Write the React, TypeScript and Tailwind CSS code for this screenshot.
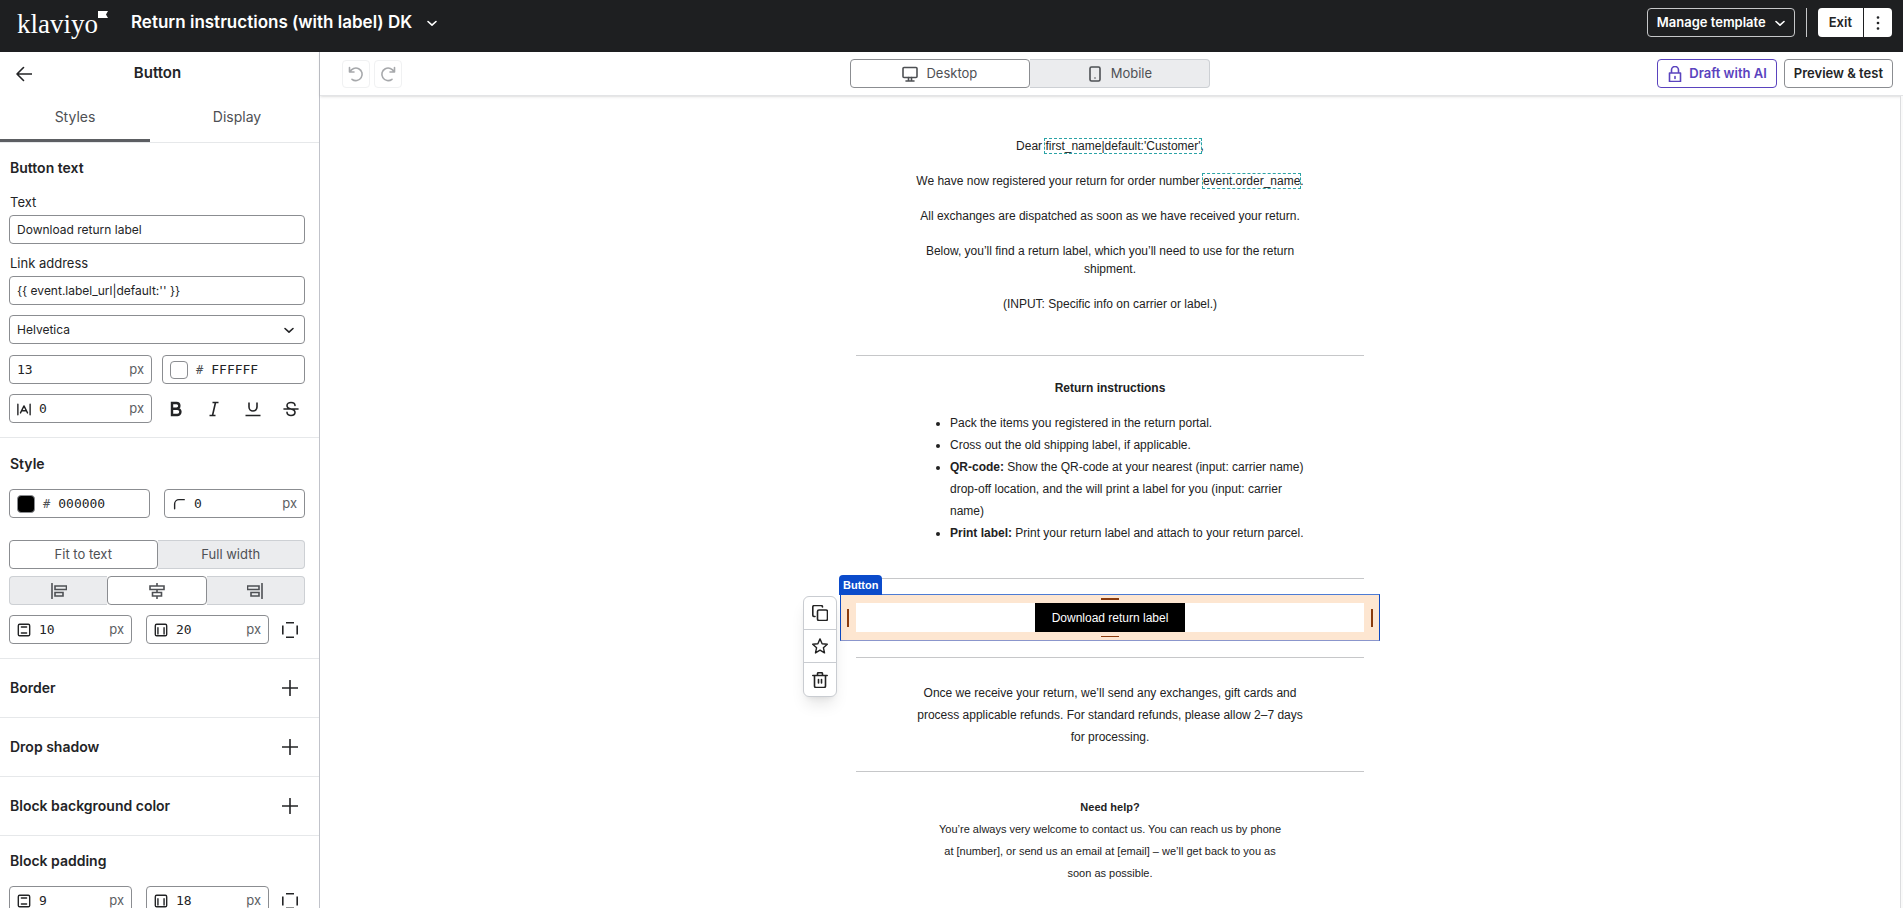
import React, { useState } from 'react';

const inputBox = 'flex h-[29px] min-w-0 items-center rounded border border-[#8b8d91] bg-white px-[7px] focus-within:ring-1 focus-within:ring-blue-500';
const textInput = 'w-full bg-transparent text-xs leading-5 outline-none';
const monoInput = "w-full min-w-0 bg-transparent font-['DejaVu_Sans_Mono',monospace] text-[13px] leading-5 text-[#232426] outline-none";
const sectionTitle = 'pl-px text-sm leading-5 font-semibold';
const fieldLabel = 'mb-1 block pl-px text-[13px] leading-[18px]';

interface IconProps {
  children: React.ReactNode;
  className?: string;
}

const Icon: React.FC<IconProps> = ({ children, className = 'size-4' }) => (
  <svg
    viewBox="0 0 16 16"
    fill="none"
    stroke="currentColor"
    strokeWidth="1.6"
    strokeLinecap="round"
    strokeLinejoin="round"
    aria-hidden="true"
    className={`shrink-0 ${className}`}
  >
    {children}
  </svg>
);

const ChevronIcon = () => (
  <Icon>
    <path d="M4 6.500 8 10.200l4-3.700" />
  </Icon>
);

const VerticalPaddingIcon = () => (
  <Icon className="size-[14px]">
    <rect x="1.500" y="1.500" width="13" height="13" rx="1.500" />
    <path d="M5 4.500h6M5 11.500h6" />
  </Icon>
);

const HorizontalPaddingIcon = () => (
  <Icon className="size-[14px]">
    <rect x="1.500" y="1.500" width="13" height="13" rx="1.500" />
    <path d="M4.500 5.500v7M11.500 5.500v7" />
  </Icon>
);

const ExpandSidesIcon = () => (
  <Icon>
    <path d="M4 .8h8M4 15.200h8M.8 3.500v9M15.200 3.500v9" strokeLinecap="butt" />
  </Icon>
);

const Logo = () => (
  <a href="#" aria-label="Klaviyo" className="flex h-8 w-[90px] items-start text-white">
    <span className="font-['Liberation_Serif',serif] text-[27px] leading-8">klaviyo</span>
    <svg viewBox="0 0 10 7" className="mt-[3px] h-[7px] w-[10px] shrink-0" aria-hidden="true">
      <path d="M0 0h10L8 3.500 10 7H0z" fill="currentColor" />
    </svg>
  </a>
);

interface SegmentProps {
  active: boolean;
  label?: string;
  ariaLabel?: string;
  icon?: React.ReactNode;
  onClick: () => void;
}

const Segment: React.FC<SegmentProps> = ({ active, label, ariaLabel, icon, onClick }) => (
  <button
    type="button"
    aria-label={ariaLabel}
    aria-pressed={active}
    onClick={onClick}
    className={`flex h-[29px] flex-1 items-center justify-center gap-2 text-[13px] text-[#4e5054] ${
      active ? 'rounded border border-[#8b8d91] bg-white' : 'border-y border-[#cdd0d4] bg-[#ebecee] first:rounded-l first:border-l last:rounded-r last:border-r'
    }`}
  >
    {icon}
    {label}
  </button>
);

interface NumberFieldProps {
  label: string;
  value: string;
  icon?: React.ReactNode;
  className?: string;
}

const NumberField: React.FC<NumberFieldProps> = ({ label, value, icon, className = '' }) => (
  <label className={`${inputBox} gap-2 ${className}`}>
    {icon}
    <input type="text" aria-label={label} defaultValue={value} className={monoInput} />
    <span className="text-[13px] text-[#5c5e62]">px</span>
  </label>
);

const ColorField: React.FC<{ label: string; value: string; swatch: string }> = ({ label, value, swatch }) => (
  <label className={`${inputBox} gap-2`}>
    <span className={`size-[18px] shrink-0 rounded border border-[#8b8d91] ${swatch}`} />
    <span className="font-['DejaVu_Sans_Mono',monospace] text-xs text-[#4e5054]">#</span>
    <input type="text" aria-label={label} defaultValue={value} className={monoInput} />
  </label>
);

const PaddingRow: React.FC<{ name: string; vertical: string; horizontal: string }> = ({ name, vertical, horizontal }) => (
  <div className="flex items-center">
    <NumberField label={`${name} vertical`} value={vertical} icon={<VerticalPaddingIcon />} className="flex-1" />
    <NumberField label={`${name} horizontal`} value={horizontal} icon={<HorizontalPaddingIcon />} className="ml-[14px] flex-1" />
    <button type="button" aria-label={`${name} for each side`} className="mr-[7px] ml-[13px]">
      <ExpandSidesIcon />
    </button>
  </div>
);

const CollapsedSection: React.FC<{ title: string }> = ({ title }) => (
  <section className="flex h-[59px] items-center justify-between border-b border-[#e6e8ea] pr-[21px] pl-[9px]">
    <h3 className={sectionTitle}>{title}</h3>
    <button type="button" aria-label={`Add ${title}`}>
      <Icon>
        <path d="M8 .5v15M.5 8h15" />
      </Icon>
    </button>
  </section>
);

const Sidebar = () => {
  const [tab, setTab] = useState('Styles');
  const [width, setWidth] = useState('fit');
  const [align, setAlign] = useState('center');

  return (
    <aside className="w-80 shrink-0 overflow-hidden border-r border-[#c1c3ca]">
      <div className="flex h-[43px] items-center px-4">
        <button type="button" aria-label="Back">
          <Icon>
            <path d="M15.500 8H1M7.500 1.500 1 8l6.500 6.500" />
          </Icon>
        </button>
        <h2 className="flex-1 pr-5 text-center text-[15px] font-semibold">Button</h2>
      </div>

      <div className="flex h-12 gap-3 border-b border-[#e6e8ea]">
        {['Styles', 'Display'].map((name) => (
          <button
            key={name}
            type="button"
            onClick={() => setTab(name)}
            className={`w-[150px] border-b-[3px] text-sm text-[#4e5054] ${
              tab === name ? 'border-[#5c5e62]' : 'border-transparent'
            }`}
          >
            {name}
          </button>
        ))}
      </div>

      <section className="border-b border-[#e6e8ea] pt-[15px] pr-[14px] pb-[14px] pl-[9px]">
        <h3 className={sectionTitle}>Button text</h3>
        <label htmlFor="text" className={`mt-[15px] ${fieldLabel}`}>Text</label>
        <div className={inputBox}>
          <input id="text" type="text" defaultValue="Download return label" className={textInput} />
        </div>
        <label htmlFor="link" className={`mt-[10px] ${fieldLabel}`}>Link address</label>
        <div className={inputBox}>
          <input id="link" type="text" defaultValue="{{ event.label_url|default:'' }}" className={textInput} />
        </div>
        <div className={`${inputBox} mt-[10px]`}>
          <select aria-label="Font family" className={`appearance-none ${textInput}`}>
            <option>Helvetica</option>
            <option>Arial</option>
            <option>Georgia</option>
          </select>
          <ChevronIcon />
        </div>
        <div className="mt-[11px] grid grid-cols-2 gap-[10px]">
          <NumberField label="Font size" value="13" />
          <ColorField label="Text color" value="FFFFFF" swatch="bg-white" />
        </div>
        <div className="mt-[10px] grid grid-cols-2 gap-[10px]">
          <NumberField
            label="Letter spacing"
            value="0"
            icon={
              <Icon className="size-[14px]">
                <path d="M1 2.500v12M15 2.500v12M4 12.500l4-8 4 8M5.500 10h5" />
              </Icon>
            }
          />
          <div className="flex justify-between">
            <button type="button" aria-label="Bold" className="flex w-7 items-center justify-center">
              <Icon>
                <path d="M4 2h4.500a2.800 2.800 0 0 1 0 5.700H4zM4 7.700h5.300a3.100 3.100 0 0 1 0 6.300H4z" strokeWidth="2.400" strokeLinejoin="miter" />
              </Icon>
            </button>
            <button type="button" aria-label="Italic" className="flex w-7 items-center justify-center">
              <Icon>
                <path d="M6.500 1.500h6M3.500 14.500h6M9.500 1.500l-3 13" strokeLinecap="butt" />
              </Icon>
            </button>
            <button type="button" aria-label="Underline" className="flex w-7 items-center justify-center">
              <Icon>
                <path d="M4 1.500V6a4 4 0 0 0 8 0V1.500M.5 14.500h15" strokeLinecap="butt" />
              </Icon>
            </button>
            <button type="button" aria-label="Strikethrough" className="flex w-7 items-center justify-center">
              <Icon>
                <path d="M12 4.500C12 2.500 10.300 1.500 8 1.500S4 2.700 4 4.700 6 7.500 8 8s4 1.300 4 3.300-1.700 3.200-4 3.200-4-1.200-4-3.200M1 8h14" />
              </Icon>
            </button>
          </div>
        </div>
      </section>

      <section className="border-b border-[#e6e8ea] pt-4 pr-[14px] pb-[14px] pl-[9px]">
        <h3 className={sectionTitle}>Style</h3>
        <div className="mt-[15px] grid grid-cols-2 gap-[14px]">
          <ColorField label="Button color" value="000000" swatch="bg-black" />
          <NumberField
            label="Corner radius"
            value="0"
            icon={
              <Icon className="size-[14px]">
                <path d="M3 13.500V8a5 5 0 0 1 5-5h6" />
              </Icon>
            }
          />
        </div>
        <div className="mt-[22px] flex">
          <Segment active={width === 'fit'} label="Fit to text" onClick={() => setWidth('fit')} />
          <Segment active={width === 'full'} label="Full width" onClick={() => setWidth('full')} />
        </div>
        <div className="mt-[7px] flex">
          <Segment
            active={align === 'left'}
            ariaLabel="Align left"
            onClick={() => setAlign('left')}
            icon={<Icon><path d="M1 .5v15M4 3h11.500v3.500H4zM4 9.500h8V13H4z" strokeLinejoin="miter" /></Icon>}
          />
          <Segment
            active={align === 'center'}
            ariaLabel="Align center"
            onClick={() => setAlign('center')}
            icon={<Icon><path d="M8 .5V3M8 6.500v3M8 13v2.500M1 3h14v3.500H1zM3.500 9.500h9V13h-9z" strokeLinejoin="miter" /></Icon>}
          />
          <Segment
            active={align === 'right'}
            ariaLabel="Align right"
            onClick={() => setAlign('right')}
            icon={<Icon><path d="M15 .5v15M.5 3H12v3.500H.5zM4 9.500h8V13H4z" strokeLinejoin="miter" /></Icon>}
          />
        </div>
        <div className="mt-[10px]">
          <PaddingRow name="Button padding" vertical="10" horizontal="20" />
        </div>
      </section>

      <CollapsedSection title="Border" />
      <CollapsedSection title="Drop shadow" />
      <CollapsedSection title="Block background color" />

      <section className="pt-[15px] pr-[14px] pl-[9px]">
        <h3 className={sectionTitle}>Block padding</h3>
        <div className="mt-[15px]">
          <PaddingRow name="Block padding" vertical="9" horizontal="18" />
        </div>
      </section>
    </aside>
  );
};

const Toolbar = () => {
  const [device, setDevice] = useState('desktop');

  return (
    <div className="flex h-11 shrink-0 items-center justify-between border-b border-[#e3e4e6] pr-[10px] pl-[22px] shadow-sm">
      <div className="flex gap-1 text-[#a6a8ab]">
        <button type="button" aria-label="Undo" className="flex size-7 items-center justify-center rounded border border-[#f0f1f2]">
          <Icon>
            <path d="M1.500 1.500v4.500H6M2 6a6.300 6.300 0 1 1 2 7.300" />
          </Icon>
        </button>
        <button type="button" aria-label="Redo" className="flex size-7 items-center justify-center rounded border border-[#f0f1f2]">
          <Icon>
            <path d="M14.500 1.500v4.500H10M14 6a6.300 6.300 0 1 0-2 7.300" />
          </Icon>
        </button>
      </div>
      <div className="flex w-[360px]">
        <Segment
          active={device === 'desktop'}
          label="Desktop"
          onClick={() => setDevice('desktop')}
          icon={
            <Icon>
              <rect x="1" y="1.500" width="14" height="10" rx="1" />
              <path d="M6.500 11.500v3M9.500 11.500v3M4 15h8" />
            </Icon>
          }
        />
        <Segment
          active={device === 'mobile'}
          label="Mobile"
          onClick={() => setDevice('mobile')}
          icon={
            <Icon>
              <rect x="3" y="1" width="10" height="14" rx="1.500" />
              <path d="M8 12h.01" />
            </Icon>
          }
        />
      </div>
      <div className="flex gap-[7px] text-[13px] font-semibold">
        <button type="button" className="flex h-[29px] items-center gap-[6px] rounded border border-[#5a43be] px-[9px] text-[#5a43be]">
          <Icon>
            <path d="M2.500 7h11v8.500h-11zM4.500 7V4a3.500 3.500 0 0 1 7 0v3M8 10.500v2" />
          </Icon>
          Draft with AI
        </button>
        <button type="button" className="h-[29px] rounded border border-[#8b8d91] px-[9px]">Preview &amp; test</button>
      </div>
    </div>
  );
};

const MergeTag: React.FC<{ children: React.ReactNode }> = ({ children }) => (
  <span className="outline-1 outline-[#2ba3a6] outline-dashed">{children}</span>
);

const SelectedButtonBlock = () => (
  <div className="relative mt-[15px] border border-x-[#0b49c4] border-t-[#4d7cd4] border-b-[#8b96cc] bg-[#fde6d1] px-[15px] py-2">
    <div className="flex justify-center bg-white">
      <a href="#" className="flex h-[29px] items-center bg-black px-[17px] text-white">Download return label</a>
    </div>

    {/* padding handles */}
    <span className="absolute top-[3px] left-1/2 h-[2px] w-[18px] -translate-x-1/2 bg-[#8a3a0c]" />
    <span className="absolute bottom-[3px] left-1/2 h-px w-[18px] -translate-x-1/2 bg-[#8a3a0c]" />
    <span className="absolute top-[14px] left-[6px] h-[18px] w-[2px] bg-[#8a3a0c]" />
    <span className="absolute top-[14px] right-[6px] h-[18px] w-[2px] bg-[#8a3a0c]" />

    <span className="absolute bottom-full -left-[2px] flex h-5 items-center rounded-t bg-[#0b4bcb] px-1 text-[11px] font-bold text-white">
      Button
    </span>

    <div className="absolute top-px -left-[38px] w-[34px] divide-y divide-[#c9ccd1] rounded-md border border-[#c9ccd1] bg-white shadow-lg">
      <button type="button" aria-label="Duplicate" className="flex h-[33px] w-full items-center justify-center">
        <Icon>
          <rect x="5.500" y="5" width="10" height="10.500" rx="1.500" />
          <path d="M3 11.500H2A1.500 1.500 0 0 1 .8 10V2A1.500 1.500 0 0 1 2.300.5H9A1.500 1.500 0 0 1 10.500 2" />
        </Icon>
      </button>
      <button type="button" aria-label="Save" className="flex h-[33px] w-full items-center justify-center">
        <Icon>
          <path d="m8 .9 2.100 4.800 5.200.5-3.900 3.500 1.100 5.200L8 12.200l-4.500 2.700 1.100-5.200L.7 6.200l5.200-.5z" strokeWidth="1.400" />
        </Icon>
      </button>
      <button type="button" aria-label="Delete" className="flex h-[33px] w-full items-center justify-center">
        <Icon>
          <path d="M.8 3.500h14.400M2.500 3.500V14a1.500 1.500 0 0 0 1.500 1.500h8a1.500 1.500 0 0 0 1.500-1.500V3.500M5.500 3V1.800A1.200 1.200 0 0 1 6.700.6h2.600a1.200 1.200 0 0 1 1.200 1.200V3M6.500 7.500V11M9.500 7.500V11" />
        </Icon>
      </button>
    </div>
  </div>
);

const Divider: React.FC<{ className: string }> = ({ className }) => (
  <hr className={`mx-4 border-t border-[#c6c7c9] ${className}`} />
);

const EmailCanvas = () => (
  <div className="flex min-h-0 flex-1">
    <main className="flex-1 overflow-hidden">
      <div className="mx-auto w-[540px] pt-[41px] font-['Liberation_Sans',Arial,sans-serif] text-xs text-[#222]">
        <div className="mx-auto flex max-w-[400px] flex-col gap-[17px] text-center leading-[18px]">
          <p>Dear <MergeTag>first_name|default:'Customer'</MergeTag>,</p>
          <p>We have now registered your return for order number <MergeTag>event.order_name</MergeTag>.</p>
          <p>All exchanges are dispatched as soon as we have received your return.</p>
          <p>Below, you’ll find a return label, which you’ll need to use for the return shipment.</p>
          <p>(INPUT: Specific info on carrier or label.)</p>
        </div>

        <Divider className="mt-[42px]" />

        <h4 className="mt-[21px] text-center leading-[22px] font-bold">Return instructions</h4>
        <ul className="mt-[13px] mr-[66px] ml-[80px] list-disc pl-[30px] leading-[22px]">
          <li>Pack the items you registered in the return portal.</li>
          <li>Cross out the old shipping label, if applicable.</li>
          <li>
            <strong>QR-code:</strong> Show the QR-code at your nearest (input: carrier name) drop-off location, and the will print a label for you (input: carrier name)
          </li>
          <li>
            <strong>Print label:</strong> Print your return label and attach to your return parcel.
          </li>
        </ul>

        <Divider className="mt-[34px]" />
        <SelectedButtonBlock />
        <Divider className="mt-4" />

        <p className="mx-auto mt-6 max-w-[400px] text-center leading-[22px]">
          Once we receive your return, we’ll send any exchanges, gift cards and process applicable refunds. For standard refunds, please allow 2–7 days for processing.
        </p>

        <Divider className="mt-[23px]" />

        <div className="mx-auto mt-6 max-w-[350px] text-center text-[11px] leading-[22px]">
          <h4 className="font-bold">Need help?</h4>
          <p>
            You’re always very welcome to contact us. You can reach us by phone at [number], or send us an email at [email] – we’ll get back to you as soon as possible.
          </p>
        </div>
      </div>
    </main>
    <div className="w-[3px] border-l border-[#dcdddf] bg-[#fafafa]" />
  </div>
);

const App = () => (
  <div className="flex h-screen flex-col overflow-hidden bg-white font-[Inter,sans-serif] text-[#232426]">
    <header className="flex h-[52px] shrink-0 items-start bg-[#1e1f21] pt-2 pr-[11px] pl-[17px] text-white">
      <Logo />
      <button type="button" className="ml-6 flex h-[29px] items-center gap-3 text-[17px] font-semibold">
        Return instructions (with label) DK
        <ChevronIcon />
      </button>
      <div className="ml-auto flex items-center text-[13px] font-semibold">
        <button type="button" className="flex h-[29px] items-center gap-[6px] rounded border border-[#c6c7c9] pr-[6px] pl-[9px]">
          Manage template
          <ChevronIcon />
        </button>
        <span className="mx-[11px] h-[29px] w-px bg-[#c6c7c9]" />
        <button type="button" className="h-[29px] rounded-l bg-white px-[11px] text-[#232426]">Exit</button>
        <button type="button" aria-label="More actions" className="ml-px flex h-[29px] w-7 items-center justify-center rounded-r bg-white text-[#232426]">
          <Icon>
            <path d="M8 2.500h.01M8 8h.01M8 13.500h.01" strokeWidth="2.700" />
          </Icon>
        </button>
      </div>
    </header>

    <div className="flex min-h-0 flex-1">
      <Sidebar />
      <div className="flex min-w-0 flex-1 flex-col">
        <Toolbar />
        <EmailCanvas />
      </div>
    </div>
  </div>
);

export default App;
